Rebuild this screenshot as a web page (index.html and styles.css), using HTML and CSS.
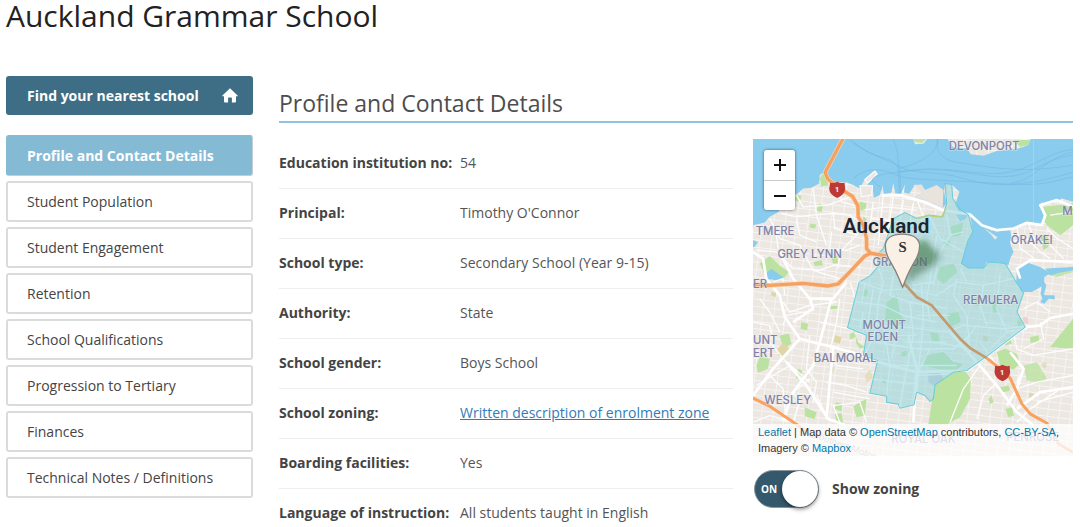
FILE: index.html
```html
<!DOCTYPE html>
<html lang="en">
<head>
<meta charset="utf-8">
<meta name="viewport" content="width=device-width, initial-scale=1">
<title>Auckland Grammar School</title>
<link rel="stylesheet" href="styles.css">
</head>
<body>
<h1 class="page-title">Auckland Grammar School</h1>
<div class="layout">
  <aside class="sidebar">
    <a class="find" href="#find">Find your nearest school
      <svg class="home" viewBox="0 0 16 15" aria-hidden="true"><path d="M8 0.3 15.6 7.4Q16 8.2 15.1 8.3H14V13.6Q14 14.6 13 14.6H9.9V10.2Q9.9 9.6 9.3 9.6H6.7Q6.1 9.6 6.1 10.2V14.6H3Q2 14.6 2 13.6V8.3H.9Q0 8.2.4 7.4Z"/></svg>
    </a>
    <nav class="menu">
      <a class="item active" href="#profile">Profile and Contact Details</a>
      <a class="item" href="#population">Student Population</a>
      <a class="item" href="#engagement">Student Engagement</a>
      <a class="item" href="#retention">Retention</a>
      <a class="item" href="#qualifications">School Qualifications</a>
      <a class="item" href="#tertiary">Progression to Tertiary</a>
      <a class="item" href="#finances">Finances</a>
      <a class="item" href="#notes">Technical Notes / Definitions</a>
    </nav>
  </aside>
  <main class="main">
    <h2 class="section-title">Profile and Contact Details</h2>
    <div class="content">
      <table class="details">
        <tbody>
        <tr><th scope="row">Education institution no:</th><td>54</td></tr>
        <tr><th scope="row">Principal:</th><td>Timothy O'Connor</td></tr>
        <tr><th scope="row">School type:</th><td>Secondary School (Year 9-15)</td></tr>
        <tr><th scope="row">Authority:</th><td>State</td></tr>
        <tr><th scope="row">School gender:</th><td>Boys School</td></tr>
        <tr><th scope="row">School zoning:</th><td><a class="link" href="#zone">Written description of enrolment zone</a></td></tr>
        <tr><th scope="row">Boarding facilities:</th><td>Yes</td></tr>
        <tr><th scope="row">Language of instruction:</th><td>All students taught in English</td></tr>
        </tbody>
      </table>
      <div class="map-column">
        <div class="map">
          <svg class="map-art" viewBox="10 12 958 949" preserveAspectRatio="xMidYMid slice" role="img" aria-label="Map of the school's enrolment zone">
            <defs>
              <pattern id="blocks" width="34" height="22" patternUnits="userSpaceOnUse" patternTransform="rotate(7)"><path d="M0 1H34M1 0V22" stroke="#f7f5f5" stroke-width="3" fill="none"/></pattern>
              <filter id="soft" x="-50%" y="-50%" width="200%" height="200%"><feGaussianBlur stdDeviation="11"/></filter>
            </defs>
            <rect x="0" y="0" width="990" height="980" fill="#ece7e1"/>
            <rect x="0" y="0" width="990" height="980" fill="url(#blocks)"/>

            <!-- parks -->
            <g fill="#bbe2a0">
              <path d="M555 748 610 710 640 700 662 730 660 790 630 845 590 867H535L545 800Z"/>
              <path d="M900 635 968 550V640ZM880 215 968 205V270L930 300 890 270 876 250Z"/>
              <path d="M30 385 60 362 95 395 118 410 100 432 50 428ZM740 650 765 640 800 655 808 685 790 702 750 690Z"/>
              <path d="M845 400 900 405 968 395V410L920 425 860 412ZM820 690 860 680 890 730 870 742 830 735Z" opacity=".8"/>
              <path d="M500 310 530 320 560 360 545 385 500 390ZM570 395 610 385 622 410 580 445 560 430Z"/>
              <path d="M410 500 440 480 452 540 470 560 430 575 405 555ZM590 535 625 530 632 560 600 575ZM540 590 565 595 568 620 545 615Z"/>
              <path d="M525 660 580 650 610 680 640 685 620 705 560 700 520 690ZM672 490 690 480 692 510 676 512ZM725 500 742 490 745 530 728 532Z"/>
              <path d="M90 600 118 595 125 625 100 640ZM30 665 60 670 55 700 25 712 20 690ZM145 700 158 705 150 730 138 728ZM165 815 200 830 195 850 165 842Z"/>
              <path d="M258 800 278 805 275 828 255 820ZM310 812 350 790 345 840 320 845ZM255 835 275 832 280 862 260 865ZM300 595 312 590 318 605 300 612Z"/>
              <path d="M155 560 175 565 172 585 152 580ZM320 605 325 622 345 635 330 640 318 622ZM235 510 265 513 262 520 238 522ZM340 460 355 465 350 485 335 480Z"/>
              <path d="M140 180 155 182 150 200 132 195ZM208 205 220 210 215 232 200 225ZM330 200 350 205 345 230 325 222ZM180 265 200 268 196 280 180 278Z"/>
              <path d="M245 370 262 360 265 385 250 385ZM190 380 215 375 220 390 195 392ZM340 245 350 250 345 270 338 265Z"/>
              <path d="M395 740 405 725 408 745ZM455 650 472 645 470 662 452 662ZM600 275 640 262 632 300 608 305ZM580 320 600 315 602 330 580 330Z"/>
              <path d="M840 605 865 600 868 620 840 622ZM760 615 780 610 785 625 765 630ZM750 755 775 750 780 765 755 772ZM715 790 725 780 730 800 720 805ZM765 820 785 815 792 840 775 845Z"/>
              <path d="M210 130 222 110 232 130 235 150 215 155ZM870 305 890 300 900 330 880 345ZM800 560 810 550 816 570 805 575Z"/>
              <path d="M790 15H840V28L810 36ZM490 12H530L515 24 495 20Z"/>
            </g>
            <g fill="#ddd6a5">
              <path d="M85 640 100 620 120 640 105 662 85 660ZM255 600 275 605 270 625 252 620ZM700 600 715 605 712 620 698 615ZM65 470 80 472 78 485 64 480ZM838 772 850 775 848 790 836 788Z"/>
              <path d="M345 720 362 700 368 730 350 742ZM875 680 890 682 886 698 875 695ZM240 690 255 695 250 710 238 706Z" opacity=".6"/>
            </g>
            <path d="M535 715 570 710 580 730 550 750 535 740Z" fill="#c6c9d4"/>
            <path d="M818 545 832 545 835 565 820 565Z" fill="#efd0cf"/>

            <!-- harbour -->
            <g fill="#8accee">
              <path d="M10 12H490L495 28 520 26 532 12H592L610 38 650 40 662 58 700 62 740 48 800 42 835 30 842 12H968V200L935 190 905 205 872 203 880 250 870 268 835 262 800 275 780 285 735 290 700 275 660 240 628 232 615 208 628 170 605 148 585 145 582 170 590 205 578 218 540 200 495 186 520 172 495 148 478 176 462 172 465 148 452 178 436 175 430 143 425 172 402 178 398 152 390 180 372 188 368 162 350 145 380 116 375 108 345 132 330 160 310 150 292 142 250 140 235 132 232 105 210 120 208 145 185 158 160 160 140 178 110 180 85 210 88 230 60 245 45 262 10 270Z"/>
              <path d="M660 240 700 275 730 290 740 310 722 300 700 285 740 288 780 285 783 300 780 325 790 350 780 370 775 390 740 380 710 380 700 398 655 398 632 385 645 345 652 320 668 290Z"/>
              <path d="M830 382 800 405 798 440 815 470 845 470 880 450 882 425 900 415 870 395Z"/>
              <path d="M870 470 885 480 912 480 914 492 895 490 882 505 870 500 876 490ZM885 400 968 395V405L930 412 900 420ZM876 430 888 450 882 475 872 475Z"/>
              <path d="M48 415 65 400 80 412 100 425 85 438 65 432 48 436ZM10 315 25 320 15 335 10 335ZM618 238 655 237 645 252 630 258Z"/>
            </g>
            <path d="M700 278 742 306 735 314 722 298Z" fill="#ece7e1"/>
            <path d="M490 150 515 148 525 165 560 150 580 165 578 218 540 200 495 186 518 174Z" fill="#e9e3dd"/>
            <path d="M345 133 375 108 382 117 352 145ZM330 152 368 152 365 180 335 185Z" fill="#ece7e1" stroke="#fff" stroke-width="3"/>
            <g fill="none" stroke="#6fb5e0" stroke-width="2" opacity=".75">
              <path d="M300 15C350 60 410 70 450 95S560 105 640 130 800 160 968 112M968 60C880 70 850 125 760 125S600 90 450 110 400 145 395 165M968 42C880 55 840 110 750 115S560 85 450 112M310 20C380 80 430 60 445 100L448 175M430 15C450 50 440 80 450 110L452 175M565 12C550 60 590 80 640 85S800 120 968 90M310 130C370 80 420 115 455 125S600 135 740 145 900 140 968 125M968 50C870 75 860 135 780 145M450 100C530 80 570 40 560 12"/>
            </g>
            <path d="M850 12V270" stroke="#a9d9f1" stroke-width="2"/>

            <!-- minor roads -->
            <g fill="none" stroke="#fdfdfe" stroke-width="4" stroke-linejoin="round">
              <path d="M140 180 160 215 235 210 300 185M190 160 200 240 230 330M95 235 140 245 185 240 250 235 255 280 325 300M60 250 90 310 150 330 190 405 270 430M270 150 275 200 330 215M20 345 80 350 130 400 210 405 250 390 330 395M250 235 300 240 330 260M245 290 240 340 290 345 330 330M140 250 150 300 200 320M325 295 270 350 265 400M100 270 80 300 85 340"/>
              <path d="M100 500 120 530 180 510 260 500M30 490 60 530 90 590M185 490 190 525 110 540 100 570M10 560 60 570 70 620M60 620 110 680 180 740M180 600 170 700 200 740 190 800M240 660 260 690 340 700M250 770 360 790M60 720 100 760 110 860M20 750 70 720 120 690M130 860 150 800 130 770 180 730M230 740 290 750 350 770M10 860 60 840 130 860M270 490 260 560 240 650M210 560 340 590M300 440 320 500M270 860 250 810 330 800 350 860"/>
              <path d="M540 640 500 720 600 715M680 570 650 610 660 650M560 620 660 640 720 670M700 560 780 570M790 590 800 640 850 660 968 640M720 640 770 590 830 580M690 690 640 760 600 860M740 740 700 780 680 850M800 760 860 740 968 720M860 800 968 770M800 860 840 820 930 760M820 700 800 740M690 620 740 690M870 560 880 610 820 640M900 530 860 500 820 520"/>
              <path d="M800 275 810 340 840 360 860 380M780 320 830 310 870 350 900 370M835 265 850 310 900 330 940 370M890 280 920 310 968 340M900 240 968 230"/>
              <path d="M370 200 360 280M400 180 385 330M430 185 420 250 410 330M460 195 450 260M490 205 480 260M340 225 410 215 500 225M360 250 450 260 540 250M370 290 420 295M500 190 520 245 500 300M70 440 100 430 105 480M235 850 200 780"/>
            </g>

            <!-- arterial roads -->
            <g fill="none" stroke="#fff" stroke-width="8" stroke-linejoin="round">
              <path d="M10 350 40 370 50 430 90 480 105 545 150 610 250 635 340 660 400 685 500 710 650 705 720 655 825 575 870 570 900 548 968 535"/>
              <path d="M90 350 130 430 180 490 250 490 290 440M180 490 190 520 130 560M245 490 210 620 190 690 130 770 100 855"/>
              <path d="M10 780 70 700 150 610M110 680 170 750 235 850 290 870M250 635 240 740 230 850"/>
              <path d="M395 180 450 180 520 200 580 225 660 238 695 270 740 285 790 280 830 263 875 270 885 240 870 210 920 195 968 215"/>
              <path d="M810 430 800 400 840 375 968 380M600 590 680 680 740 750 800 830 850 870M780 650 820 700 800 760 770 810"/>
              <path d="M475 600 500 700 490 860M800 820 870 770 968 755"/>
            </g>

            <!-- enrolment zone -->
            <path id="zone" d="M384 356 400 340 430 250 465 232 500 250 540 240 578 245 590 205 585 145 605 148 608 190 628 220 655 240 668 290 652 320 645 345 635 385 655 398 700 398 715 380 765 384 798 440 820 473 800 530 825 575 720 655 650 705 610 710 555 748 550 790 540 798 525 780 500 770 492 808 450 818 445 806 410 800 410 782 360 773 383 675 340 660 350 600 293 577 328 440 360 422 384 395Z" fill="#98d6dc" fill-opacity=".58" stroke="#68cdda" stroke-width="3"/>
            <g fill="none" stroke="#c4ebf2" stroke-width="4" opacity=".85">
              <path d="M328 440 400 465 470 460 560 480 620 440 700 450 790 430M320 500 400 510 460 540 560 560M305 550 390 570 470 575 590 590 640 570 760 580 820 573M385 395 400 440 385 500 380 580 345 660M430 420 420 480 480 500 490 600 470 700 450 815M515 450 520 560 510 660 500 770M560 300 545 400 530 490 540 560M380 620 500 640 610 640 660 600M380 680 440 690 620 690M370 730 500 745M400 570 420 690 410 780M590 240 600 300 570 350 550 450M620 430 610 480 650 540 660 650M700 450 690 510 710 570M750 410 740 520 770 590M440 590 425 670M470 405 490 450 550 440M540 245 570 310 640 350M600 300 640 290M630 400 650 440M460 620 590 620M390 600 500 600M340 530 330 580M345 445 335 500M370 460 350 590M500 540 600 540M480 500 590 520"/>
            </g>
            <path d="M500 250 535 240 550 244 575 245 588 220" fill="none" stroke="#b9d37b" stroke-width="4"/>

            <!-- motorways -->
            <g fill="none" stroke-linejoin="round">
              <path d="M280 10 226 112 234 132 262 155 308 184 324 212 325 245 340 270 350 310 350 340 362 354 408 362M10 448 60 450 160 444 235 452 265 446 300 410 345 362 362 354" stroke="#fbd7b4" stroke-width="14"/>
              <path d="M280 10 226 112 234 132 262 155 308 184 324 212 325 245 340 270 350 310 350 340 362 354 408 362M10 448 60 450 160 444 235 452 265 446 300 410 345 362 362 354" stroke="#f4a162" stroke-width="10"/>
              <path d="M458 440 500 485 545 510 630 610 660 638 710 668" stroke="#c39a6c" stroke-width="8"/>
              <path d="M710 668 750 700 780 728 815 805 840 835 890 863 925 925 968 950M10 788 60 812 140 866 190 905" stroke="#f9a260" stroke-width="9"/>
            </g>

            <!-- place names -->
            <g class="place">
              <text x="596" y="45">DEVONPORT</text>
              <text x="18" y="299">TMERE</text>
              <text x="83" y="367">GREY LYNN</text>
              <text x="10" y="457">ER</text>
              <text x="368" y="392">GRAFTON</text>
              <text x="782" y="325">ŌRĀKEI</text>
              <text x="936" y="241">M</text>
              <text x="639" y="505">REMUERA</text>
              <text x="338" y="580">MOUNT</text>
              <text x="353" y="618">EDEN</text>
              <text x="192" y="681">BALMORAL</text>
              <text x="10" y="627">UNT</text>
              <text x="10" y="666">ERT</text>
              <text x="44" y="804">WESLEY</text>
              <text x="424" y="922">ROYAL OAK</text>
              <text x="768" y="915">PENROSE</text>
            </g>
            <text class="city" x="279" y="293">Auckland</text>
            <text class="road-name" transform="translate(190 905) rotate(20)">Southern Motorway</text>

            <!-- highway shields -->
            <g fill="#bd3935">
              <path d="M241 143Q252 146 262 140 272 146 284 143L286 162Q284 180 262 189 240 180 238 162Z"/>
              <path d="M735 691Q746 694 757 688 767 694 778 691L780 710Q778 728 757 737 735 728 733 710Z"/>
            </g>
            <text class="shield-no" x="262" y="170">1</text>
            <text class="shield-no" x="756" y="718">1</text>

            <!-- school marker -->
            <path d="M460 450 490 350Q505 310 530 315 545 345 570 352 570 388 525 405Z" fill="#3f6a48" opacity=".55" filter="url(#soft)"/>
            <path d="M458 456 445 425Q437 406 423 382 406 356 406 330 410 297 457 297 504 297 509 330 509 356 492 382 478 406 470 425Z" fill="#fbf0e6" stroke="#85807d" stroke-width="4"/>
            <text class="pin" x="458" y="350">S</text>
          </svg>
          <div class="zoom">
            <button type="button" aria-label="Zoom in"><svg viewBox="0 0 12 12"><path d="M6 0V12M0 6H12"/></svg></button>
            <button type="button" aria-label="Zoom out"><svg viewBox="0 0 12 12"><path d="M0 6H12"/></svg></button>
          </div>
          <div class="attribution"><a href="#leaflet">Leaflet</a> | Map data © <a href="#osm">OpenStreetMap</a> contributors, <a href="#cc">CC-BY-SA</a>, Imagery © <a href="#mapbox">Mapbox</a></div>
        </div>
        <label class="toggle">
          <span class="switch"><input type="checkbox" checked><span class="state">ON</span></span>
          Show zoning
        </label>
      </div>
    </div>
  </main>
</div>
</body>
</html>
```
FILE: styles.css
```css
* { box-sizing: border-box; }

body {
  margin: 0;
  padding: 0 7px 0 6px;
  background: #fff;
  color: #444;
  font: 14px/20px "Open Sans", "Noto Sans", sans-serif;
}

a { text-decoration: none; }

.page-title {
  margin: 0 0 44px;
  color: #222;
  font-size: 30px;
  font-weight: 400;
  line-height: 32px;
}

.layout {
  display: grid;
  grid-template-columns: 247px minmax(0, 1fr);
  gap: 26px;
}

.find {
  display: flex;
  align-items: center;
  justify-content: space-between;
  height: 39px;
  margin-bottom: 20px;
  padding: 0 15px 0 21px;
  border-radius: 3px;
  background: #3d6e85;
  color: #fff;
  font-weight: 700;
}

.home { width: 16px; height: 15px; fill: #fff; }

.menu { display: grid; gap: 5px; }

.item {
  padding: 9px 19px 8px;
  border: 2px solid #dadcdc;
  border-radius: 3px;
  color: #444;
}

.active {
  border-color: #85bad5 #c4cdd2 #c4cdd2 #85bad5;
  border-width: 1px;
  padding: 10px 20px 9px;
  background: #85bad5;
  color: #fff;
  font-weight: 700;
}

.section-title {
  margin: 12px 0 16px;
  padding-bottom: 3px;
  border-bottom: 2px solid #8fc4dc;
  color: #4d4d4d;
  font-size: 23px;
  font-weight: 400;
  line-height: 30px;
}

.content {
  display: grid;
  grid-template-columns: minmax(0, 1fr) 320px;
  align-items: start;
  gap: 20px;
}

.details { width: 100%; border-collapse: collapse; }

.details th,
.details td {
  padding: 14px 0 15px;
  border-bottom: 1px solid #eee;
  text-align: left;
}

.details tr:last-child > * { padding-bottom: 0; border-bottom: 0; }
.details th { width: 181px; font-weight: 700; }
.details td { color: #555; }

.link { color: #337ab7; text-decoration: underline; }

.map {
  position: relative;
  overflow: hidden;
}

.map-art { display: block; width: 100%; }

.place {
  fill: #7c82a8;
  font: 500 34px Inter, sans-serif;
  stroke: #f3f0ee;
  stroke-opacity: 0.5;
  stroke-width: 4px;
  paint-order: stroke;
}

.city { fill: #1d2630; font: 600 62px Roboto, sans-serif; }
.road-name { fill: #a79d98; font: 28px Roboto, sans-serif; }
.shield-no { fill: #fff; font: 700 22px Roboto, sans-serif; text-anchor: middle; }
.pin { fill: #333; font: 700 44px "Liberation Serif", serif; text-anchor: middle; }

.zoom {
  position: absolute;
  top: 11px;
  left: 11px;
  display: grid;
  overflow: hidden;
  border-radius: 3px;
  box-shadow: 0 0 3px rgba(0, 0, 0, 0.6);
}

.zoom button {
  display: grid;
  place-items: center;
  width: 31px;
  height: 30px;
  padding: 0;
  border: 0;
  background: #fff;
}

.zoom button + button { border-top: 1px solid #ccc; }
.zoom svg { width: 12px; height: 12px; fill: none; stroke: #111; stroke-width: 2; }

.attribution {
  position: absolute;
  right: 0;
  bottom: 0;
  left: 0;
  padding: 0 5px;
  background: rgba(255, 255, 255, 0.76);
  color: #333;
  font: 11px/16px "Liberation Sans", sans-serif;
}

.attribution a { color: #0078a8; }

.toggle {
  display: flex;
  align-items: center;
  gap: 13px;
  margin-top: 14px;
  padding-left: 1px;
  font-weight: 700;
}

.switch { position: relative; display: flex; }

.switch input {
  display: flex;
  justify-content: flex-end;
  width: 65px;
  height: 38px;
  margin: 0;
  border: 1px solid #8d979b;
  border-radius: 19px;
  background: #34596c;
  appearance: none;
}

.switch input::before {
  content: "";
  width: 36px;
  border-radius: 50%;
  background: #fff;
  box-shadow: 0 2px 4px rgba(0, 0, 0, 0.5);
}

.state {
  position: absolute;
  top: 9px;
  left: 7px;
  color: #fff;
  font-size: 10px;
}
```
